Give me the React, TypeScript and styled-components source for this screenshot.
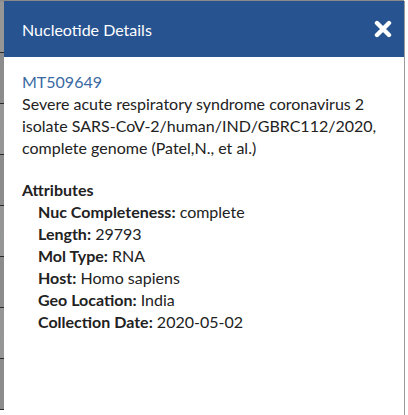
import React from "react";
import styled, { createGlobalStyle } from "styled-components";

const Global = createGlobalStyle`
  html, body { margin: 0; padding: 0; }
  body {
    width: 408px;
    height: 415px;
    overflow: hidden;
    background: #ffffff;
    font-family: Lato, "Noto Sans", "Liberation Sans", sans-serif;
  }
`;

const Page = styled.div`
  position: relative;
  width: 408px;
  height: 415px;
  overflow: hidden;
  background: #ffffff;
`;

const Backdrop = styled.div`
  display: flex;
  flex-direction: column;
  width: 404px;
  padding-top: 1px;
  background: #8f8f8f;
  border-top: 1px solid #8a8a8a;
`;

const BackRow = styled.div<{ $shade: boolean }>`
  height: 51px;
  border-bottom: 1px solid #2a2a2a;
  background: ${(p) => (p.$shade ? "#8c8c8c" : "#969696")};
  font-family: "Liberation Sans", sans-serif;
  font-size: 17px;
  color: #3a2a10;
  display: flex;
  align-items: center;
  padding-top: 10px;
  box-sizing: border-box;
  overflow: hidden;
`;

const Glyph = styled.span`
  margin-left: -5px;
`;

const Panel = styled.div`
  position: absolute;
  left: 4px;
  top: 1px;
  width: 400px;
  height: 420px;
  background: #ffffff;
  border-right: 1px solid #9a9a9a;
  display: flex;
  flex-direction: column;
`;

const Header = styled.div`
  height: 56px;
  background: #275391;
  display: flex;
  align-items: center;
  justify-content: space-between;
  padding: 0 10px 0 18px;
`;

const Title = styled.h2`
  margin: 0;
  font-size: 16px;
  font-weight: 400;
  color: #ffffff;
`;

const CloseButton = styled.button`
  border: none;
  background: transparent;
  padding: 0;
  width: 22px;
  height: 22px;
  display: flex;
  align-items: center;
  justify-content: center;
  cursor: pointer;
`;

const Body = styled.div`
  padding: 14px 18px 0 18px;
  font-size: 16px;
  line-height: 22px;
  color: #222222;
`;

const Accession = styled.a`
  display: block;
  color: #3a6aa3;
  text-decoration: none;
`;

const Description = styled.p`
  margin: 0;
`;

const SectionTitle = styled.h3`
  margin: 20px 0 0 0;
  font-size: 16px;
  line-height: 22px;
  font-weight: 700;
`;

const AttrList = styled.ul`
  list-style: none;
  margin: 0;
  padding: 0 0 0 16px;
`;

const AttrItem = styled.li`
  margin: 0;
`;

const AttrLabel = styled.strong`
  font-weight: 700;
`;

const attrs: [string, string][] = [
  ["Nuc Completeness", "complete"],
  ["Length", "29793"],
  ["Mol Type", "RNA"],
  ["Host", "Homo sapiens"],
  ["Geo Location", "India"],
  ["Collection Date", "2020-05-02"],
];

export default function App() {
  return (
    <Page>
      <Global />
      <Backdrop>
        {Array.from({ length: 8 }).map((_, i) => (
          <BackRow key={i} $shade={i % 2 === 1}>
            {i > 0 && <Glyph>)</Glyph>}
          </BackRow>
        ))}
      </Backdrop>
      <Panel>
        <Header>
          <Title>Nucleotide Details</Title>
          <CloseButton aria-label="Close">
            <svg width="18" height="18" viewBox="0 0 18 18">
              <path
                d="M3 3 L15 15 M15 3 L3 15"
                stroke="#ffffff"
                strokeWidth="4.4"
                strokeLinecap="round"
              />
            </svg>
          </CloseButton>
        </Header>
        <Body>
          <Accession href="#">MT509649</Accession>
          <Description>
            Severe acute respiratory syndrome coronavirus 2 isolate
            SARS-CoV-2/human/IND/GBRC112/2020, complete genome (Patel,N., et al.)
          </Description>
          <SectionTitle>Attributes</SectionTitle>
          <AttrList>
            {attrs.map(([k, v]) => (
              <AttrItem key={k}>
                <AttrLabel>{k}:</AttrLabel> {v}
              </AttrItem>
            ))}
          </AttrList>
        </Body>
      </Panel>
    </Page>
  );
}
